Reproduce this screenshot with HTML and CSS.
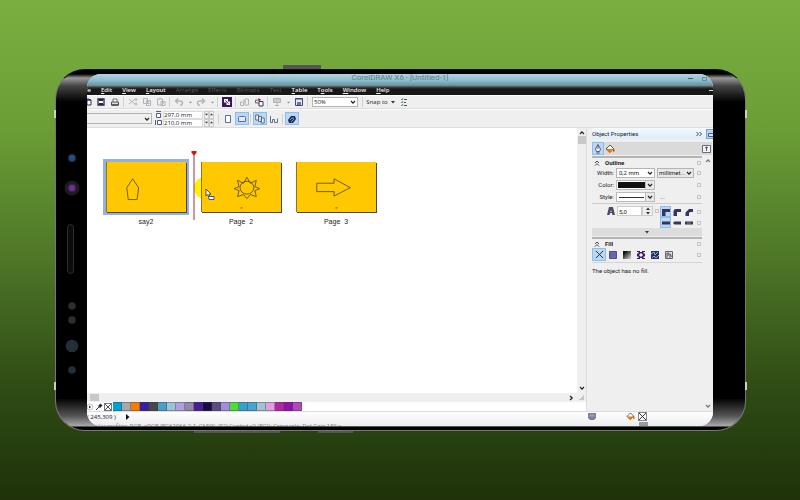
FILE: index.html
```html
<!DOCTYPE html>
<html lang="en">
<head>
  <meta charset="UTF-8">
  <meta name="viewport" content="width=device-width, initial-scale=1.0">
  <title>CorelDRAW X6 - [Untitled-1]</title>
  <link rel="stylesheet" href="styles.css">
</head>
<body>

  <!-- shared symbols -->
  <svg class="defs" aria-hidden="true">
    <symbol id="chev" viewBox="0 0 6 6"><path d="M1 2l2 2.200L5 2" fill="none" stroke="#222" stroke-width="1.200"/></symbol>
    <symbol id="caret" viewBox="0 0 4 4"><path d="M0 1h4L2 3.400z" fill="#333"/></symbol>
    <symbol id="bucket" viewBox="0 0 10 10"><path d="M1 5l4-4 3.500 3.500L5 8.500z" fill="#fff" stroke="#444" stroke-width=".9"/><path d="M1.200 5h7.200L5 8.800z" fill="#f07808"/><path d="M8.500 4q1.800 2.500.4 4.200-1.600-1.400-.4-4.200z" fill="#b04c08"/></symbol>
    <symbol id="cross" viewBox="0 0 10 10"><path d="M1 1l8 8M9 1L1 9" stroke="#222" stroke-width="1" fill="none"/></symbol>
    <symbol id="fold" viewBox="0 0 6 6"><path d="M1 3l2-2 2 2M1 5.600l2-2 2 2" fill="none" stroke="#333" stroke-width=".9"/></symbol>
  </svg>

  <div class="phone">
    <span class="key key-top"></span>
    <span class="key key-vol"></span>
    <span class="key key-power"></span>
    <span class="band band-lt"></span>
    <span class="band band-lb"></span>
    <span class="band band-rt"></span>
    <span class="band band-rb"></span>

    <div class="bezel bezel-left">
      <svg class="sensors" viewBox="0 0 31 352" aria-hidden="true">
        <circle cx="16" cy="84" r="4.600" fill="#141a24"/><circle cx="16" cy="84" r="3.200" fill="#2c4880"/>
        <circle cx="16" cy="114" r="7.600" fill="#1c1a1e"/><circle cx="16" cy="114" r="4.600" fill="#382048"/><circle cx="16" cy="114" r="3" fill="#6c3488"/>
        <rect x="11.500" y="150.500" width="6" height="49" rx="3" fill="#0c0c0c" stroke="#2c2c2c"/>
        <circle cx="16" cy="232" r="3.800" fill="#2e2e2e"/>
        <circle cx="16" cy="246" r="3.800" fill="#2e2e2e"/>
        <circle cx="16" cy="272" r="6.300" fill="#232f38"/>
        <circle cx="16" cy="296" r="3.800" fill="#232f38"/>
      </svg>
    </div>

    <main class="screen">
      <header class="titlebar">
        <span class="title">CorelDRAW X6 - [Untitled-1]</span>
        <span class="window-buttons"><i class="min"></i><i class="max"></i></span>
      </header>

      <nav class="menubar">
        <a href="#" class="cut-off">File</a>
        <a href="#"><u>E</u>dit</a>
        <a href="#"><u>V</u>iew</a>
        <a href="#"><u>L</u>ayout</a>
        <a href="#" class="off">Arrange</a>
        <a href="#" class="off">Effects</a>
        <a href="#" class="off">Bitmaps</a>
        <a href="#" class="off">Text</a>
        <a href="#"><u>T</u>able</a>
        <a href="#">T<u>o</u>ols</a>
        <a href="#"><u>W</u>indow</a>
        <a href="#"><u>H</u>elp</a>
        <i class="doc-min"></i>
      </nav>

      <div class="toolbar standard">
        <button class="half" aria-label="Open"><svg width="8" height="10" viewBox="0 0 8 10"><path d="M0 2h2l1 1h1v5H0z" fill="#fff" stroke="#33305c"/><path d="M0 3h4" stroke="#33305c" stroke-width="1.500"/></svg></button>
        <button aria-label="Save"><svg width="10" height="10" viewBox="0 0 10 10"><path d="M2 2h6v6H2z" fill="#fff" stroke="#26264c" stroke-width="1.300"/><path d="M3 2h4v2H3zM3 6h4v2H3z" fill="#26264c"/></svg></button>
        <button aria-label="Print"><svg width="10" height="10" viewBox="0 0 10 10"><path d="M3 5V2h4v3" fill="#fff" stroke="#555" stroke-width=".8"/><path d="M1.500 5h7v3h-7z" fill="#ddd" stroke="#444" stroke-width=".9"/><path d="M1.500 8h7" stroke="#222"/></svg></button>
        <i class="sep"></i>
        <button aria-label="Cut"><svg class="dim" width="10" height="10" viewBox="0 0 10 10"><path d="M1 2l6 5M1 7l6-5"/><circle cx="8" cy="2.500" r="1"/><circle cx="8" cy="7" r="1"/></svg></button>
        <button aria-label="Copy"><svg class="dim" width="10" height="10" viewBox="0 0 10 10"><path d="M1.500 1.500h4v5h-4zM4.500 3.500h4v5h-4zM5.500 5h2M5.500 6.500h2"/></svg></button>
        <button aria-label="Paste"><svg class="dim" width="10" height="10" viewBox="0 0 10 10"><path d="M1.500 2h5v6h-5zM3 1.500h2M5 4.500h4v4H5zM6 6h2"/></svg></button>
        <i class="sep"></i>
        <button aria-label="Undo"><svg class="dim" width="10" height="10" viewBox="0 0 10 10"><path d="M4 1.500L1.500 4 4 6.500M2 4h4q2.500 0 2.500 2T6 8.500" stroke-width="1.400"/></svg></button>
        <button class="drop" aria-label="Undo list"><svg class="faded" width="3" height="3"><use href="#caret"/></svg></button>
        <button aria-label="Redo"><svg class="dim" width="10" height="10" viewBox="0 0 10 10"><path d="M6 1.500L8.500 4 6 6.500M8 4H4Q1.500 4 1.500 6T4 8.500" stroke-width="1.400"/></svg></button>
        <button class="drop" aria-label="Redo list"><svg class="faded" width="3" height="3"><use href="#caret"/></svg></button>
        <i class="sep"></i>
        <button aria-label="Search content"><svg width="10" height="10" viewBox="0 0 10 10"><path d="M0 0h10v10H0z" fill="#3c1468"/><path d="M2 2h4v2.500h2V8H4.500V5.500H2z" fill="#fff"/><path d="M3.500 3.500l3 3" stroke="#3c1468" stroke-width=".9"/></svg></button>
        <i class="sep"></i>
        <button aria-label="Import"><svg class="dim" width="10" height="10" viewBox="0 0 10 10"><path d="M.500 5h3v3.500h-3zM5 2h3.500v6H5zM3 3l3 2" /></svg></button>
        <button aria-label="Export"><svg width="10" height="10" viewBox="0 0 10 10"><path d="M1.500 3h4v3h-4z" fill="#ddd" stroke="#555" stroke-width=".8"/><path d="M5 4.500h4v4.500H5z" fill="#fff" stroke="#33305c"/><path d="M4 1l3 1.500L5 5z" fill="#cc2020"/></svg></button>
        <i class="sep"></i>
        <button aria-label="Application launcher"><svg class="dim" width="10" height="10" viewBox="0 0 10 10"><path d="M1.500 1.500h7v4h-7z" fill="#ccc"/><path d="M5 5.500V8M3 8.500h4"/></svg></button>
        <button class="drop" aria-label="Launcher list"><svg class="faded" width="3" height="3"><use href="#caret"/></svg></button>
        <button aria-label="Welcome screen"><svg width="10" height="10" viewBox="0 0 10 10"><path d="M1.500 1.500h7v7h-7z" fill="#e4e8f4" stroke="#444a78"/><path d="M1 2h8" stroke="#444a78" stroke-width="1.200"/><path d="M3 8V5h4v3" fill="#6c74a8"/></svg></button>
        <i class="sep"></i>
        <span class="pick zoom-level"><select aria-label="Zoom level"><option>50%</option></select><svg width="6" height="6"><use href="#chev"/></svg></span>
        <i class="sep"></i>
        <button class="wide">Snap to</button>
        <button class="drop" aria-label="Snap list"><svg width="4" height="4"><use href="#caret"/></svg></button>
        <button aria-label="Options"><svg width="10" height="10" viewBox="0 0 10 10"><path d="M2 2l1 1 1-2M2 5l1 1 1-2M2 8l1 1 1-2" fill="none" stroke="#48905c" stroke-width=".9"/><path d="M5 2.500h3M5 5.500h2M5 8.500h3" stroke="#555"/></svg></button>
      </div>

      <div class="toolbar property">
        <span class="pick paper"><select aria-label="Page size"><option></option></select><svg width="6" height="6"><use href="#chev"/></svg></span>
        <div class="dims">
          <svg width="7" height="7" viewBox="0 0 7 7"><path d="M1.500 2.500h4v4h-4zM1 .500h5" fill="#fff" stroke="#555c84"/></svg>
          <input type="text" value="297,0 mm" aria-label="Page width">
          <span class="spin"><button aria-label="Narrower"><svg width="3" height="3"><use href="#caret"/></svg></button><button aria-label="Wider"><svg class="flip" width="3" height="3"><use href="#caret"/></svg></button></span>
          <svg width="7" height="7" viewBox="0 0 7 7"><path d="M2.500 1.500h4v4h-4zM.500 1v5" fill="#fff" stroke="#555c84"/></svg>
          <input type="text" value="210,0 mm" aria-label="Page height">
          <span class="spin"><button aria-label="Shorter"><svg width="3" height="3"><use href="#caret"/></svg></button><button aria-label="Taller"><svg class="flip" width="3" height="3"><use href="#caret"/></svg></button></span>
        </div>
        <i class="sep"></i>
        <button aria-label="Portrait"><svg width="10" height="10" viewBox="0 0 10 10"><path d="M2.500 1.500h5v7h-5z" fill="#fff" stroke="#666c90"/></svg></button>
        <button class="on" aria-label="Landscape"><svg width="10" height="10" viewBox="0 0 10 10"><path d="M1.500 3.500q0-1 1-1h5q1 0 1 1v4h-7z" fill="#dcecfc" stroke="#666c90"/></svg></button>
        <i class="sep"></i>
        <button class="on" aria-label="All pages"><svg width="10" height="10" viewBox="0 0 10 10"><path d="M.700 1h3v5h-3zM3.500 2.500h3v5h-3zM6.200 4h3v5h-3z" fill="#f4f8ff" stroke="#555c84" stroke-width=".9"/></svg></button>
        <button aria-label="Current page"><svg width="10" height="10" viewBox="0 0 10 10"><path d="M1.500 2v6.500h2v-3h2v3h3v-4" fill="none" stroke="#666c90"/></svg></button>
        <i class="sep"></i>
        <button class="on" aria-label="Treat as filled"><svg width="10" height="10" viewBox="0 0 10 10"><path d="M1 6l3-4h4l1 3-3 4H2z" fill="#23285c"/><path d="M3 6l2-2h2M4 8l3-3" stroke="#9cc4f0" stroke-width=".8" fill="none"/></svg></button>
      </div>

      <div class="workspace">
        <section class="sorter">
          <div class="canvas">
            <figure class="page selected">
              <svg viewBox="0 0 80 51"><path d="M26 17l-6 9 1.500 12h9L32 26z"/></svg>
              <figcaption>say2</figcaption>
            </figure>
            <figure class="page">
              <svg viewBox="0 0 80 51">
                <path d="M45.500 15.500l3.500 6 6-3-1.500 6.500 5 2-5 2 1.500 6-6-2-3.500 4-3.500-4-6 2 1.500-6-5-2 5-2-1.500-6.500 6 3z"/>
                <ellipse cx="45.500" cy="26" rx="7" ry="6.500"/>
                <path d="M39 46.500h2"/>
              </svg>
              <figcaption>Page&nbsp; 2</figcaption>
            </figure>
            <figure class="page">
              <svg viewBox="0 0 80 51"><path d="M20 21.500h17.500V17L54 26l-16.500 8.500V30H20zM39 46.500h2"/></svg>
              <figcaption>Page&nbsp; 3</figcaption>
            </figure>
            <i class="halo"></i>
            <svg class="marker" width="6" height="70" viewBox="0 0 6 70"><path d="M3 3v67" stroke="#a0303c" stroke-width="1"/><path d="M.500 1h5v2L3 5.500.500 3z" fill="#e01010"/></svg>
            <svg class="cursor" width="10" height="13" viewBox="0 0 10 13"><path d="M1 1v7l1.700-1.500L4 9l1-.600-1.200-2.300H6z" fill="#fff" stroke="#333" stroke-width=".8"/><path d="M3.500 8.500h5.500v3H4z" fill="#fff" stroke="#3c4470" stroke-width=".9"/></svg>
          </div>
          <div class="vscroll">
            <svg width="6" height="6" class="flip"><use href="#chev"/></svg>
            <i class="thumb"></i>
            <svg width="6" height="6" class="end"><use href="#chev"/></svg>
          </div>
          <div class="hscroll">
            <i class="thumb"></i>
            <svg width="6" height="6" class="end turn"><use href="#chev"/></svg>
            <svg width="5" height="5" viewBox="0 0 5 5"><path d="M4 0h1v5H0V4h2V2h2z" fill="#c4c4c4"/></svg>
          </div>
          <div class="palette">
            <svg width="7" height="8" viewBox="0 0 7 8"><circle cx="3" cy="4" r="3" fill="#fff" stroke="#aaa" stroke-width=".7"/><path d="M2 2.500v3L4 4z" fill="#222"/></svg>
            <svg width="8" height="8" viewBox="0 0 8 8"><path d="M1 7l3-3" stroke="#333"/><path d="M3 3l2 2 2.500-2.500-2-2z" fill="#23285c"/></svg>
            <button class="none" aria-label="No colour"><svg width="8" height="8"><use href="#cross"/></svg></button>
            <ul class="swatches">
              <li></li><li></li><li></li><li></li><li></li><li></li><li></li>
              <li></li><li></li><li></li><li></li><li></li><li></li><li></li>
              <li></li><li></li><li></li><li></li><li></li><li></li><li></li>
            </ul>
          </div>
        </section>

        <aside class="docker">
          <div class="docker-title">
            <h2>Object Properties</h2>
            <svg width="6" height="6" viewBox="0 0 6 6"><path d="M.500 1l2 2-2 2M3.500 1l2 2-2 2" fill="none" stroke="#333" stroke-width=".9"/></svg>
            <span class="docker-tab"><svg width="7" height="8" viewBox="0 0 7 8"><path d="M1.500 3.500h6v3h-6z" fill="#d8e4f4" stroke="#555c84"/></svg></span>
          </div>
          <div class="docker-tools">
            <button class="on" aria-label="Outline"><svg width="8" height="10" viewBox="0 0 8 10"><path d="M4 .500L1.500 5l1 2.500h3l1-2.500z" fill="#fff" stroke="#444a78" stroke-width=".9"/><path d="M4 2v3M2.500 9h3" stroke="#444a78"/></svg></button>
            <button aria-label="Fill"><svg width="10" height="10"><use href="#bucket"/></svg></button>
            <button class="last" aria-label="View mode"><svg width="9" height="8" viewBox="0 0 9 8"><path d="M.500.500h8v7h-8z" fill="#f4f4f4" stroke="#666c84"/><path d="M3 3l1.500-1L6 3M4.500 2v4" stroke="#333" fill="none" stroke-width=".8"/></svg></button>
          </div>

          <div class="docker-body">
            <div class="panels">
              <section class="panel">
                <h3><svg width="6" height="6"><use href="#fold"/></svg>Outline<i class="box"></i></h3>
                <div class="row">
                  <label for="width">Width:</label>
                  <span class="pick value"><input type="text" id="width" value="0,2 mm"><svg width="6" height="6"><use href="#chev"/></svg></span>
                  <span class="pick unit"><select aria-label="Unit"><option>millimet...</option></select><svg width="6" height="6"><use href="#chev"/></svg></span>
                  <i class="box"></i>
                </div>
                <div class="row">
                  <label for="color">Color:</label>
                  <button class="well" id="color"><i class="ink"></i><b><svg width="6" height="6"><use href="#chev"/></svg></b></button>
                  <i class="box"></i>
                </div>
                <div class="row">
                  <label for="style">Style:</label>
                  <button class="well" id="style"><i class="line"></i><b><svg width="6" height="6"><use href="#chev"/></svg></b></button>
                  <button class="dots">...</button>
                  <i class="box"></i>
                </div>
                <div class="row corners">
                  <svg class="miter-icon" width="8" height="8" viewBox="0 0 8 8"><path d="M2 0h4l2 8H5.500L4 3 2.500 8H0z" fill="#4c4a66"/><path d="M1 5.500h6" stroke="#4c4a66"/></svg>
                  <input type="text" class="miter" value="5,0" aria-label="Miter limit">
                  <span class="updown"><button aria-label="Increase"><svg class="flip" width="4" height="4"><use href="#caret"/></svg></button><button aria-label="Decrease"><svg width="4" height="4"><use href="#caret"/></svg></button></span>
                  <i class="box"></i>
                  <div class="joins">
                    <button class="on" aria-label="Miter join"><svg width="8" height="8" viewBox="0 0 8 8"><path d="M0 1h8v3H3.500v4H0z"/></svg></button>
                    <button aria-label="Round join"><svg width="8" height="8" viewBox="0 0 8 8"><path d="M3 1h5v3H4v4H.500V3.500Q.500 1 3 1z"/></svg></button>
                    <button aria-label="Bevel join"><svg width="8" height="8" viewBox="0 0 8 8"><path d="M4 1h4v3H5L4 5v3H.500V4.500z"/></svg></button>
                    <i class="box"></i>
                    <button class="on" aria-label="Square cap"><svg width="8" height="8" viewBox="0 0 8 8"><path d="M0 2.500h8v3H0z"/></svg></button>
                    <button aria-label="Round cap"><svg width="8" height="8" viewBox="0 0 8 8"><path d="M1.500 2.500H8v3H1.500L0 4z"/></svg></button>
                    <button aria-label="Extended cap"><svg width="8" height="8" viewBox="0 0 8 8"><path d="M0 2.500h8v3H0z"/><path d="M2 4h4" stroke="#888"/></svg></button>
                    <i class="box"></i>
                  </div>
                </div>
                <button class="more" aria-label="More options"><svg width="4" height="4"><use href="#caret"/></svg></button>
              </section>

              <section class="panel">
                <h3><svg width="6" height="6"><use href="#fold"/></svg>Fill<i class="box"></i></h3>
                <div class="fills">
                  <button class="on" aria-label="No fill"><svg width="9" height="9"><use href="#cross"/></svg></button>
                  <button aria-label="Uniform fill"><svg width="8" height="8" viewBox="0 0 8 8"><path d="M.500.500h7v7h-7z" fill="#6468b0" stroke="#4c5090"/></svg></button>
                  <button aria-label="Fountain fill"><svg width="8" height="8" viewBox="0 0 8 8"><defs><linearGradient id="fade" x2="1" y2="1"><stop offset=".2" stop-color="#111"/><stop offset="1" stop-color="#ddd"/></linearGradient></defs><path d="M0 0h8v8H0z" fill="url(#fade)"/></svg></button>
                  <button aria-label="Pattern fill"><svg width="8" height="8" viewBox="0 0 8 8"><path d="M0 0h8v8H0z" fill="#3c1c60"/><path d="M4 2l2 2-2 2-2-2zM0 1h1.500v1.500H0zM6.500 1H8v1.500H6.500zM0 5.500h1.500V7H0zM6.500 5.500H8V7H6.500zM3 0h2v1H3zM3 7h2v1H3z" fill="#fff"/></svg></button>
                  <button aria-label="Texture fill"><svg width="8" height="8" viewBox="0 0 8 8"><path d="M0 0h8v8H0z" fill="#20305c"/><path d="M0 3l3-2 1 3 3-3M1 7l2-2 2 2 3-3" stroke="#9cacdc" fill="none"/></svg></button>
                  <button aria-label="PostScript fill"><svg width="8" height="8" viewBox="0 0 8 8"><path d="M.500.500h7v7h-7z" fill="#dcdce4" stroke="#666"/><path d="M2 7V2h2v2H2M5 7V3l2 3" stroke="#444" fill="none" stroke-width=".8"/></svg></button>
                  <i class="box"></i>
                </div>
                <p>The object has no fill.</p>
              </section>
            </div>
            <div class="docker-scroll">
              <svg width="6" height="6" class="flip"><use href="#chev"/></svg>
              <svg width="6" height="6" class="end"><use href="#chev"/></svg>
            </div>
          </div>
        </aside>
      </div>

      <footer class="statusbar">
        <div class="status-row">
          <span class="coords">( 245,309 )</span>
          <svg width="4" height="6" viewBox="0 0 4 6"><path d="M0 0l3.500 3L0 6z" fill="#111"/></svg>
          <div class="status-icons">
            <svg class="proof" width="8" height="8" viewBox="0 0 8 8"><path d="M0 0h8v5L6 7H2L0 5z" fill="#7880a0"/><path d="M1.500 1.500h5v2h-5z" fill="#b09ca8"/></svg>
            <svg width="9" height="9"><use href="#bucket"/></svg>
            <span class="nofill"><svg width="9" height="9"><use href="#cross"/></svg></span>
          </div>
        </div>
        <div class="status-row profile">
          <span>color profiles: RGB: sRGB IEC61966-2.1; CMYK: ISO Coated v2 (ECI); Grayscale: Dot Gain 15% ▸</span>
          <i class="outline-chip"></i>
        </div>
      </footer>
    </main>

    <div class="bezel bezel-right"></div>
  </div>

</body>
</html>
```
FILE: styles.css
```css
* {
  box-sizing: border-box;
}
body {
  margin: 0;
  min-height: 100vh;
  display: flex;
  padding: 69px 54px 69px 55px;
  background: linear-gradient(#7baf40 0%, #6b9d36 26%, #4d7627 52%, #2e4b14 78%, #1f320a 100%);
  font-family: "Open Sans", "Noto Sans", sans-serif;
  font-size: 6px;
  line-height: 8px;
  color: #222;
}
button, input, select {
  font: inherit;
  color: inherit;
  margin: 0;
  padding: 0;
  border: 0;
  border-radius: 0;
  background: none;
  appearance: none;
  min-width: 0;
}
svg {
  display: block;
  flex: none;
}
i {
  flex: none;
}
h2, h3, p, ul, figure {
  margin: 0;
  padding: 0;
}
.defs {
  position: absolute;
  width: 0;
  height: 0;
}

/* phone */
.phone {
  position: relative;
  flex: 1;
  display: flex;
  padding: 4px 0;
  border: 1px solid #777;
  border-top-color: #111;
  border-radius: 30px;
  background: linear-gradient(#000 0, #000 4px, #999 8px, #444 16px, #000 32px, #000 calc(100% - 32px), #555 calc(100% - 14px), #aaa calc(100% - 4px), #000 calc(100% - 3px), #000 100%);
}
.bezel-left {
  flex: 0 0 30px;
}
.bezel-right {
  flex: 0 0 32px;
}
.sensors {
  width: 31px;
  height: 100%;
}
.key, .band {
  position: absolute;
  background: #555;
}
.key-top {
  left: 33%;
  top: -5px;
  width: 38px;
  height: 4px;
}
.key-vol {
  left: 20%;
  bottom: -3px;
  width: 86px;
  height: 2px;
}
.key-power {
  left: 38%;
  bottom: -3px;
  width: 35px;
  height: 2px;
}
.band {
  width: 2px;
  height: 8px;
  background: #ccc;
}
.band-lt, .band-lb {
  left: -2px;
}
.band-rt, .band-rb {
  right: -2px;
}
.band-lt, .band-rt {
  top: 11%;
}
.band-lb, .band-rb {
  bottom: 11%;
}

/* app window */
.screen {
  flex: 1;
  min-width: 0;
  display: flex;
  flex-direction: column;
  overflow: hidden;
  border-radius: 14px;
  background: #f4f4f4;
}
.titlebar {
  position: relative;
  height: 11px;
  flex: none;
  display: flex;
  justify-content: center;
  background: linear-gradient(#b4d4dc, #8cbccb 60%, #5c9cb0);
  font-family: Roboto, "Open Sans", sans-serif;
  font-size: 8px;
  color: #61808c;
}
.window-buttons {
  position: absolute;
  right: 6px;
  top: 3px;
  display: flex;
  gap: 9px;
}
.min {
  width: 5px;
  height: 1px;
  margin-top: 1px;
  background: #45626c;
}
.max {
  width: 5px;
  height: 4px;
  border: 1px solid #6c8c98;
}
.menubar {
  height: 10px;
  flex: none;
  display: flex;
  align-items: center;
  gap: 10px;
  background: linear-gradient(#999 0, #444 2px, #181818 4px);
}
.menubar a {
  color: #eee;
  font-weight: 600;
  text-decoration: none;
  white-space: nowrap;
}
.menubar .off {
  color: #585858;
  font-weight: normal;
}
.menubar .cut-off {
  width: 4px;
  display: flex;
  justify-content: flex-end;
  overflow: hidden;
}
.doc-min {
  width: 4px;
  height: 1px;
  margin-left: auto;
  background: #ddd;
}
.toolbar {
  flex: none;
  display: flex;
  align-items: center;
  background: #efefef;
}
.standard {
  height: 14px;
  border-top: 1px solid #fff;
  border-bottom: 1px solid #dcdcdc;
}
.property {
  height: 19px;
  border-top: 1px solid #fff;
  border-bottom: 1px solid #dcdcdc;
}
.toolbar button {
  width: 14px;
  height: 13px;
  flex: none;
  display: flex;
  align-items: center;
  justify-content: center;
}
.toolbar .half, .toolbar .drop {
  width: 8px;
}
.toolbar .half {
  width: 7px;
}
.toolbar .wide {
  width: 24px;
}
.toolbar .on, .docker .on {
  background: #b8d8f6;
  border: 1px solid #90bce8;
}
.sep {
  width: 1px;
  height: 10px;
  margin: 0 2px 0 1px;
  background: #d0d0d0;
}
.dim {
  fill: none;
  stroke: #b4b4b8;
}
.faded {
  opacity: 0.5;
}
.pick {
  display: flex;
  align-items: center;
  padding: 0 1px;
  border: 1px solid #b4b4b4;
  background: #fff;
}
.pick select, .pick input {
  flex: 1;
  width: 0;
  height: 8px;
}
.zoom-level {
  width: 46px;
  height: 10px;
  margin: 0 3px 0 2px;
}
.paper {
  width: 65px;
  height: 11px;
  border-left: 0;
  background: #f0f0f0;
}
.dims {
  display: grid;
  grid-template-columns: 7px 40px 10px;
  grid-auto-rows: 8px;
  column-gap: 1px;
  align-items: center;
  margin: 0 3px;
}
.dims input {
  width: 100%;
  height: 8px;
  padding-left: 1px;
  background: #fff;
  box-shadow: inset 0 0 0 1px #ddd;
}
.spin {
  display: flex;
}
.toolbar .spin button {
  width: 5px;
  height: 8px;
  border: 1px solid #ccc;
}

/* page sorter */
.workspace {
  flex: 1;
  min-height: 0;
  display: flex;
}
.sorter {
  flex: 1;
  min-width: 0;
  display: grid;
  grid-template-columns: 1fr 9px;
  grid-template-rows: 1fr 9px 9px;
  background: #fff;
}
.canvas {
  position: relative;
  display: flex;
  align-items: flex-start;
  gap: 15px;
  padding: 34px 19px;
}
.page {
  position: relative;
  z-index: 1;
  width: 80px;
}
.page > svg {
  width: 100%;
  background: #ffc800;
  border-left: 1px solid #8c7430;
  box-shadow: 1px 1px 0 #4c4450;
  fill: none;
  stroke: #4c4010;
  stroke-width: 0.8;
}
.selected > svg {
  box-shadow: 1px 1px 0 #4c4450, 0 0 0 3px #94b0dc;
}
.page figcaption {
  margin-top: 6px;
  font-family: "Liberation Sans", sans-serif;
  font-size: 7px;
  text-align: center;
}
.halo {
  position: absolute;
  left: 107px;
  top: 49px;
  width: 22px;
  height: 22px;
  border-radius: 50%;
  background: #fff000;
}
.marker {
  position: absolute;
  left: 104px;
  top: 22px;
  z-index: 2;
}
.cursor {
  position: absolute;
  left: 118px;
  top: 60px;
  z-index: 2;
}
.vscroll, .hscroll, .docker-scroll {
  display: flex;
  align-items: center;
  background: #efefef;
}
.vscroll, .docker-scroll {
  flex-direction: column;
  padding: 2px 0;
}
.vscroll .thumb {
  width: 8px;
  height: 8px;
  background: #c8c8c8;
}
.hscroll {
  grid-column: 1 / -1;
  padding: 0 2px 0 3px;
  gap: 5px;
}
.hscroll .thumb {
  width: 9px;
  height: 7px;
  background: #c8c8c8;
}
.vscroll .end, .docker-scroll .end {
  margin-top: auto;
}
.hscroll .end {
  margin-left: auto;
}
.flip {
  transform: rotate(180deg);
}
.turn {
  transform: rotate(-90deg);
}
.palette {
  grid-column: 1 / -1;
  display: flex;
  align-items: center;
  gap: 1px;
}
.none {
  width: 8px;
  height: 8px;
  outline: 1px solid #777;
  outline-offset: -1px;
}
.swatches {
  display: flex;
  list-style: none;
}
.swatches li {
  width: 9px;
  height: 9px;
  border: 1px solid rgba(60, 60, 60, 0.4);
  border-left: 0;
  background: #00a0d8;
}
.swatches li:nth-child(2) { background: #a8a8ac; }
.swatches li:nth-child(3) { background: #f47c08; }
.swatches li:nth-child(4) { background: #3820a0; }
.swatches li:nth-child(5) { background: #484848; }
.swatches li:nth-child(6) { background: #48a0c8; }
.swatches li:nth-child(7) { background: #9cc4d8; }
.swatches li:nth-child(8) { background: #b0a0e0; }
.swatches li:nth-child(9) { background: #9088a4; }
.swatches li:nth-child(10) { background: #4a1c98; }
.swatches li:nth-child(11) { background: #180c48; }
.swatches li:nth-child(12) { background: #5a4c84; }
.swatches li:nth-child(13) { background: #a48cdc; }
.swatches li:nth-child(14) { background: #4cdc3c; }
.swatches li:nth-child(15) { background: #38a0cc; }
.swatches li:nth-child(16) { background: #48a4cc; }
.swatches li:nth-child(17) { background: #a0c4d0; }
.swatches li:nth-child(18) { background: #e0a0e0; }
.swatches li:nth-child(19) { background: #b028a8; }
.swatches li:nth-child(20) { background: #9010a8; }
.swatches li:nth-child(21) { background: #b048c0; }

/* object properties */
.docker {
  flex: 0 0 127px;
  display: flex;
  flex-direction: column;
  padding-left: 5px;
  border-left: 1px solid #dcdcdc;
  background: #efefef;
  font-family: Roboto, "Open Sans", sans-serif;
}
.docker button {
  display: flex;
  align-items: center;
  justify-content: center;
}
.docker-title {
  height: 11px;
  display: flex;
  align-items: center;
  gap: 4px;
  background: linear-gradient(#f4faff, #dcecf8);
}
.docker-title h2 {
  flex: 1;
  font-size: 6px;
  font-weight: normal;
}
.docker-tab {
  width: 7px;
  border: 1px solid #80a0cc;
  border-right: 0;
  background: #b8d4f0;
}
.docker-tools {
  height: 13px;
  display: flex;
  margin: 3px 1px 1px 0;
  background: #dadada;
}
.docker-tools button {
  width: 12px;
}
.docker-tools .last {
  margin-left: auto;
}
.docker-body {
  flex: 1;
  display: flex;
}
.panels {
  flex: 1;
  min-width: 0;
}
.docker-scroll {
  width: 11px;
  opacity: 0.6;
}
.panel {
  border-top: 2px solid #b4b4b4;
}
.panel h3 {
  height: 9px;
  display: flex;
  align-items: center;
  gap: 5px;
  padding-left: 2px;
  font-size: 6px;
}
.box {
  width: 4px;
  height: 4px;
  margin: 0 1px 0 auto;
  border: 1px solid #c4c4c4;
}
.row {
  height: 12px;
  display: flex;
  align-items: center;
  gap: 2px;
}
.row label {
  width: 22px;
  text-align: right;
}
.value {
  width: 39px;
  height: 10px;
  padding-left: 2px;
}
.unit {
  width: 37px;
  height: 10px;
  background: #e8e8e8;
}
.docker .well {
  width: 39px;
  height: 10px;
  justify-content: flex-start;
  border: 1px solid #bbb;
  background: #fff;
}
.well b {
  height: 8px;
  margin-left: auto;
  padding: 1px;
  border-left: 1px solid #bbb;
  background: #e8e8e8;
}
.ink {
  width: 27px;
  height: 6px;
  margin-left: 1px;
  background: #111;
}
.line {
  width: 25px;
  height: 1px;
  margin-left: 2px;
  background: #333;
}
.docker .dots {
  padding-left: 3px;
}
.row.corners {
  height: 25px;
  align-items: flex-start;
  gap: 0;
  padding-top: 2px;
  border-top: 1px solid #ccc;
}
.miter-icon {
  margin: 1px 2px 0 15px;
}
.miter {
  width: 25px;
  height: 10px;
  padding-left: 1px;
  border: 1px solid #ccc;
  background: #fff;
}
.updown {
  width: 11px;
  border: 1px solid #ccc;
}
.updown button {
  width: 9px;
  height: 4px;
}
.corners > .box {
  margin: 3px 1px 0 2px;
}
.joins {
  flex: 1;
  display: grid;
  grid-template-columns: 11px 12px 12px 1fr;
  grid-auto-rows: 11px;
  align-items: center;
}
.joins button {
  height: 11px;
}
.joins svg {
  fill: #34345c;
}
.docker .more {
  width: 100%;
  height: 8px;
  margin-bottom: 1px;
  background: #dcdcdc;
}
.fills {
  height: 15px;
  display: flex;
  align-items: center;
  margin-bottom: 4px;
  padding-bottom: 1px;
  border-bottom: 1px solid #d4d4d4;
}
.fills button {
  width: 14px;
  height: 13px;
}

/* status bar */
.statusbar {
  height: 15px;
  flex: none;
  overflow: hidden;
  border-top: 1px solid #dcdcdc;
  background: linear-gradient(#fff, #ececec);
}
.status-row {
  height: 9px;
  display: flex;
  align-items: center;
}
.coords {
  margin-right: 10px;
}
.status-icons {
  width: 125px;
  margin-left: auto;
  display: flex;
  align-items: center;
  gap: 3px;
}
.proof {
  margin-right: 27px;
}
.nofill {
  outline: 1px solid #888;
  outline-offset: -1px;
}
.profile {
  padding-left: 5px;
  font-family: Roboto, "Open Sans", sans-serif;
  color: #888;
  white-space: nowrap;
}
.outline-chip {
  width: 9px;
  height: 8px;
  margin: 0 65px 0 auto;
  background: #999;
}
```
